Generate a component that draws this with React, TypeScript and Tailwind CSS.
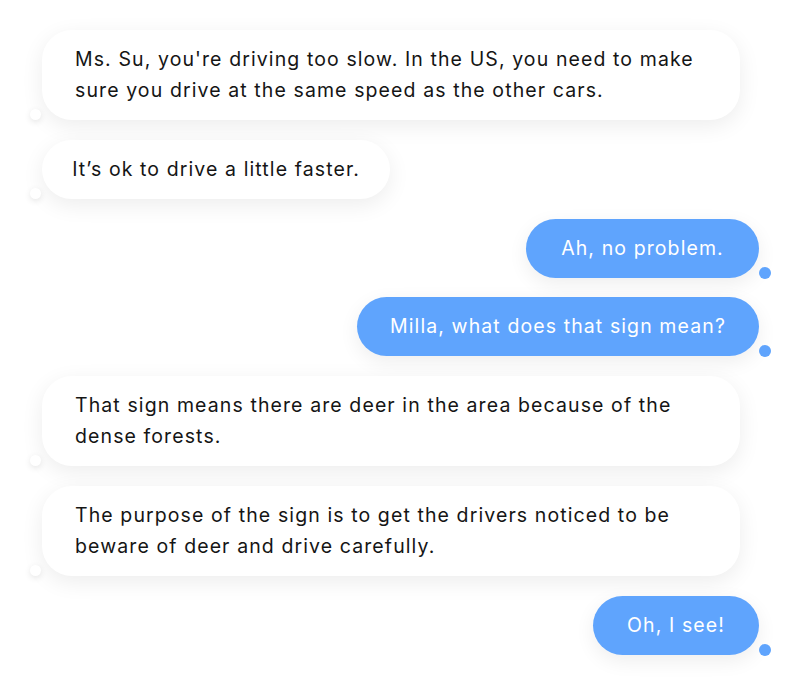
import React from "react";

type Message = {
  id: number;
  from: "bot" | "me";
  width: string;
  lines: string[];
};

// bubble widths are taken from the design, text is centred in single-line bubbles
const messages: Message[] = [
  {
    id: 1,
    from: "bot",
    width: "w-[698px]",
    lines: [
      "Ms. Su, you're driving too slow. In the US, you need to make",
      "sure you drive at the same speed as the other cars.",
    ],
  },
  { id: 2, from: "bot", width: "w-[348px]", lines: ["It’s ok to drive a little faster."] },
  { id: 3, from: "me", width: "w-[233px]", lines: ["Ah, no problem."] },
  { id: 4, from: "me", width: "w-[402px]", lines: ["Milla, what does that sign mean?"] },
  {
    id: 5,
    from: "bot",
    width: "w-[698px]",
    lines: [
      "That sign means there are deer in the area because of the",
      "dense forests.",
    ],
  },
  {
    id: 6,
    from: "bot",
    width: "w-[698px]",
    lines: [
      "The purpose of the sign is to get the drivers noticed to be",
      "beware of deer and drive carefully.",
    ],
  },
  { id: 7, from: "me", width: "w-[166px]", lines: ["Oh, I see!"] },
];

function Bubble({ message }: { message: Message }) {
  const isMe = message.from === "me";
  const multi = message.lines.length > 1;

  return (
    <div className={`flex ${isMe ? "justify-end pr-[41px]" : "justify-start pl-[42px]"}`}>
      <div
        className={`relative rounded-[30px] py-[14px] text-[19.5px] leading-[31px] tracking-[1.1px] ${
          multi ? "px-[33px] text-left" : "text-center"
        } ${
          isMe
            ? "bg-[#5fa4fd] text-white shadow-[0_6px_20px_rgba(0,0,0,0.07)]"
            : "bg-white text-[#151515] shadow-[0_6px_22px_rgba(0,0,0,0.075)]"
        } ${message.width}`}
      >
        {message.lines.map((line, i) => (
          <div key={i} className="whitespace-nowrap">
            {line}
          </div>
        ))}

        {/* tail dot */}
        {isMe ? (
          <span className="absolute -right-[12px] bottom-[-1px] h-[12px] w-[12px] rounded-full bg-[#5fa4fd]" />
        ) : (
          <span className="absolute -left-[12px] bottom-0 h-[11px] w-[11px] rounded-full bg-white shadow-[0_2px_6px_rgba(0,0,0,0.1)]" />
        )}
      </div>
    </div>
  );
}

export default function App() {
  return (
    <div
      className="h-[690px] w-[800px] bg-white pt-[30px]"
      style={{ fontFamily: "Inter, 'Open Sans', sans-serif" }}
    >
      <div className="flex flex-col gap-[19.8px]">
        {messages.map((m) => (
          <Bubble key={m.id} message={m} />
        ))}
      </div>
    </div>
  );
}
